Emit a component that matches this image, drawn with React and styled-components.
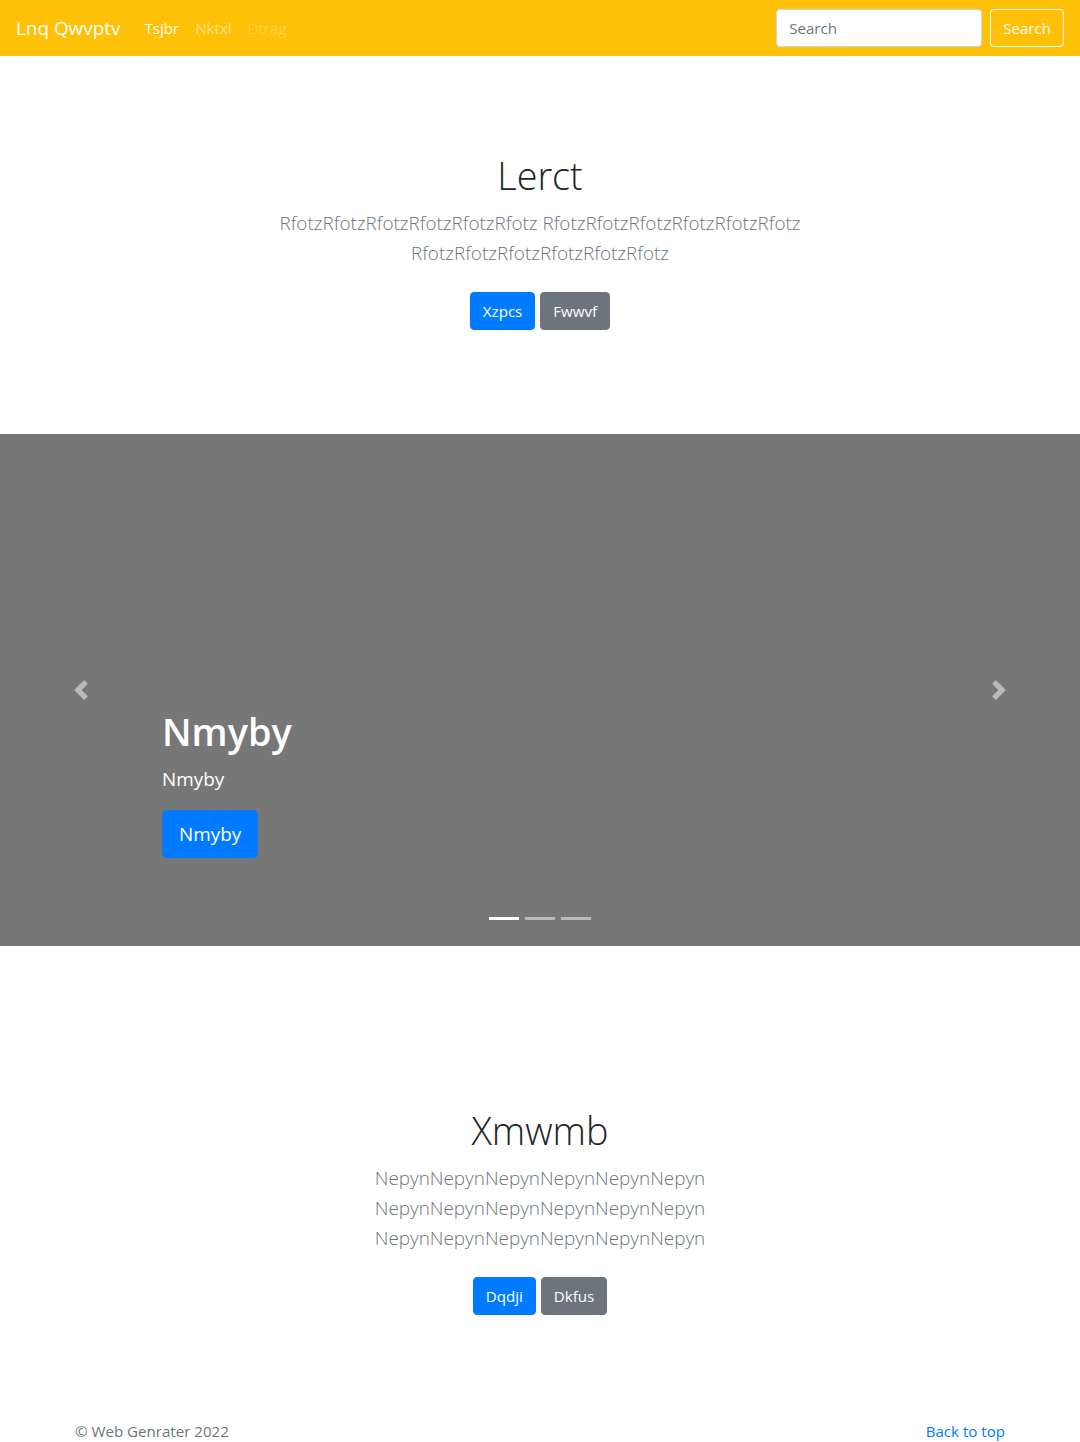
import React from "react";
import styled, { createGlobalStyle } from "styled-components";

const FONT = `"Segoe UI", "Open Sans", "Noto Sans", "Liberation Sans", sans-serif`;

const GlobalStyle = createGlobalStyle`
  html, body { margin: 0; padding: 0; }
  body {
    font-family: ${FONT};
    font-size: 15.1px;
    line-height: 24px;
    color: #212529;
    background: #fff;
  }
  * { box-sizing: border-box; }
`;

const Navbar = styled.nav`
  height: 56px;
  background: #ffc107;
  display: flex;
  align-items: center;
  justify-content: space-between;
  padding: 8px 16px;
`;

const NavLeft = styled.div`
  display: flex;
  align-items: center;
`;

const Brand = styled.a`
  font-size: 18.9px;
  line-height: 30px;
  color: #fff;
  text-decoration: none;
  margin-right: 16px;
  padding: 5px 0;
`;

const NavList = styled.ul`
  display: flex;
  list-style: none;
  margin: 0;
  padding: 0;
`;

const NavLink = styled.a`
  display: block;
  padding: 8px;
  font-size: 15.1px;
  line-height: 24px;
  text-decoration: none;
  color: ${(p) =>
    p.$state === "active"
      ? "#fff"
      : p.$state === "disabled"
      ? "rgba(255,255,255,.25)"
      : "rgba(255,255,255,.5)"};
`;

const SearchForm = styled.form`
  display: flex;
  align-items: center;
  margin: 0;
`;

const SearchInput = styled.input`
  width: 206px;
  height: 38px;
  padding: 6px 12px;
  font-family: ${FONT};
  font-size: 15.1px;
  line-height: 24px;
  color: #495057;
  background: #fff;
  border: 1px solid #ced4da;
  border-radius: 4px;
  margin-right: 8px;
  outline: none;
  &::placeholder { color: #6c757d; }
`;

const OutlineButton = styled.button`
  height: 38px;
  padding: 6px 12px;
  font-family: ${FONT};
  font-size: 15.1px;
  line-height: 24px;
  color: #f8f9fa;
  background: transparent;
  border: 1px solid #f8f9fa;
  border-radius: 4px;
`;

const Jumbotron = styled.section`
  padding: 96px 0;
  text-align: center;
`;

const Narrow = styled.div`
  max-width: 610px;
  margin: 0 auto;
`;

const Heading = styled.h1`
  margin: 0 0 8px;
  font-size: 37.8px;
  line-height: 48px;
  font-weight: 300;
  color: #212529;
`;

const Lead = styled.p`
  margin: 0 0 16px;
  font-size: 18.9px;
  line-height: 30px;
  font-weight: 300;
  color: #6c757d;
`;

const ButtonRow = styled.div`
  display: flex;
  justify-content: ${(p) => (p.$left ? "flex-start" : "center")};
  gap: 5px;
  padding: ${(p) => (p.$left ? "0" : "8px 0")};
`;

const Button = styled.a`
  display: inline-block;
  padding: ${(p) => (p.$lg ? "8px 16px" : "6px 12px")};
  font-size: ${(p) => (p.$lg ? "18.9px" : "15.1px")};
  line-height: ${(p) => (p.$lg ? "30px" : "24px")};
  border-radius: ${(p) => (p.$lg ? "5px" : "4px")};
  border: 1px solid ${(p) => (p.$variant === "secondary" ? "#6c757d" : "#007bff")};
  background: ${(p) => (p.$variant === "secondary" ? "#6c757d" : "#007bff")};
  color: #fff;
  text-decoration: none;
`;

const Carousel = styled.div`
  position: relative;
  height: 512px;
  background: #777;
  margin-bottom: 65px;
  overflow: hidden;
`;

const Caption = styled.div`
  position: absolute;
  left: 15%;
  right: 15%;
  bottom: 68px;
  padding: 20px 0;
  color: #fff;
  text-align: left;
  z-index: 10;
`;

const CaptionTitle = styled.h1`
  margin: 0 0 8px;
  font-size: 37.8px;
  line-height: 48px;
  font-weight: 600;
`;

const CaptionText = styled.p`
  margin: 0 0 16px;
  font-size: 18.9px;
  line-height: 30px;
`;

const Control = styled.a`
  position: absolute;
  top: 0;
  bottom: 0;
  ${(p) => (p.$side === "prev" ? "left: 0;" : "right: 0;")}
  width: 15%;
  display: flex;
  align-items: center;
  justify-content: center;
  opacity: 0.5;
  z-index: 5;
`;

const Indicators = styled.ol`
  position: absolute;
  left: 15%;
  right: 15%;
  bottom: 0;
  margin: 0 0 16px;
  padding: 0;
  list-style: none;
  display: flex;
  justify-content: center;
  z-index: 15;
`;

const Indicator = styled.li`
  width: 30px;
  height: 23px;
  margin: 0 3px;
  border-top: 10px solid transparent;
  border-bottom: 10px solid transparent;
  background: #fff;
  background-clip: padding-box;
  opacity: ${(p) => (p.$active ? 1 : 0.5)};
`;

const Footer = styled.footer`
  max-width: 960px;
  margin: 0 auto;
  padding: 0 15px 48px;
  display: flex;
  justify-content: space-between;
  font-size: 15.1px;
  line-height: 24px;
  color: #6c757d;
`;

const FooterText = styled.p`
  margin: 0;
`;

const FooterLink = styled.a`
  color: #007bff;
  text-decoration: none;
`;

const PrevIcon = () => (
  <svg width="20" height="20" viewBox="0 0 8 8" fill="#fff">
    <path d="M5.25 0l-4 4 4 4 1.5-1.5L4.25 4l2.5-2.5L5.25 0z" />
  </svg>
);

const NextIcon = () => (
  <svg width="20" height="20" viewBox="0 0 8 8" fill="#fff">
    <path d="M2.75 0l-1.5 1.5L3.75 4l-2.5 2.5L2.75 8l4-4-4-4z" />
  </svg>
);

export default function App() {
  const rf = "RfotzRfotzRfotzRfotzRfotzRfotz";
  const np = "NepynNepynNepynNepynNepynNepyn";
  return (
    <>
      <GlobalStyle />
      <Navbar>
        <NavLeft>
          <Brand href="#">Lnq Qwvptv</Brand>
          <NavList>
            <li><NavLink href="#" $state="active">Tsjbr</NavLink></li>
            <li><NavLink href="#">Nktxl</NavLink></li>
            <li><NavLink href="#" $state="disabled">Dtrag</NavLink></li>
          </NavList>
        </NavLeft>
        <SearchForm onSubmit={(e) => e.preventDefault()}>
          <SearchInput type="text" placeholder="Search" />
          <OutlineButton type="submit">Search</OutlineButton>
        </SearchForm>
      </Navbar>

      <Jumbotron>
        <Narrow>
          <Heading>Lerct</Heading>
          <Lead>{`${rf} ${rf} ${rf}`}</Lead>
          <ButtonRow>
            <Button href="#">Xzpcs</Button>
            <Button href="#" $variant="secondary">Fwwvf</Button>
          </ButtonRow>
        </Narrow>
      </Jumbotron>

      <Carousel>
        <Caption>
          <CaptionTitle>Nmyby</CaptionTitle>
          <CaptionText>Nmyby</CaptionText>
          <ButtonRow $left>
            <Button href="#" $lg>Nmyby</Button>
          </ButtonRow>
        </Caption>
        <Control href="#" $side="prev"><PrevIcon /></Control>
        <Control href="#" $side="next"><NextIcon /></Control>
        <Indicators>
          <Indicator $active />
          <Indicator />
          <Indicator />
        </Indicators>
      </Carousel>

      <Jumbotron>
        <Narrow>
          <Heading>Xmwmb</Heading>
          <Lead>{`${np} ${np} ${np}`}</Lead>
          <ButtonRow>
            <Button href="#">Dqdji</Button>
            <Button href="#" $variant="secondary">Dkfus</Button>
          </ButtonRow>
        </Narrow>
      </Jumbotron>

      <Footer>
        <FooterText>© Web Genrater 2022</FooterText>
        <FooterText><FooterLink href="#">Back to top</FooterLink></FooterText>
      </Footer>
    </>
  );
}
